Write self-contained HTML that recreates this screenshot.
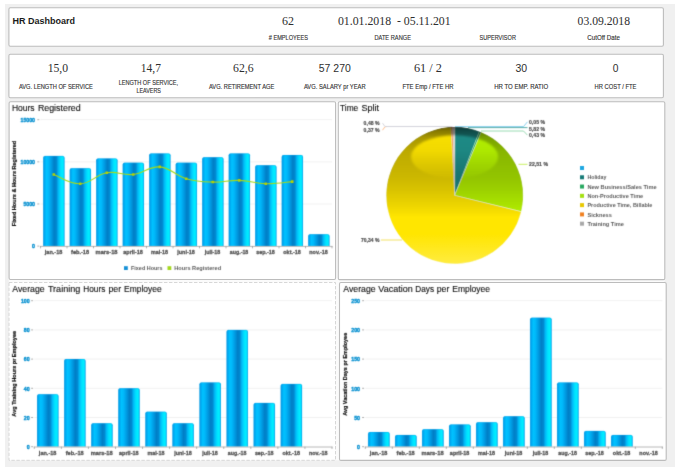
<!DOCTYPE html>
<html lang="en"><head><meta charset="utf-8"><title>HR Dashboard</title>
<style>
html,body{margin:0;padding:0;background:#fff;}
body{width:675px;height:467px;overflow:hidden;font-family:"Liberation Sans", "DejaVu Sans", sans-serif;}
svg{display:block;position:absolute;left:0;top:0;}
svg text{font-family:"Liberation Sans", "DejaVu Sans", sans-serif;}
svg text.sf{font-family:"Liberation Serif", "DejaVu Serif", serif;}
</style></head><body>
<svg width="675" height="467" viewBox="0 0 675 467">
<defs>
<filter id="soft" x="0" y="0" width="675" height="467" filterUnits="userSpaceOnUse" color-interpolation-filters="sRGB"><feConvolveMatrix order="3" kernelMatrix="1 6 1 6 36 6 1 6 1" divisor="64" edgeMode="none" preserveAlpha="false"/></filter>
<linearGradient id="bar" x1="0" y1="0" x2="1" y2="0">
<stop offset="0" stop-color="#0096e0"/>
<stop offset="0.06" stop-color="#00a8f0"/>
<stop offset="0.15" stop-color="#00c2ff"/>
<stop offset="0.25" stop-color="#00b8fa"/>
<stop offset="0.40" stop-color="#0098e0"/>
<stop offset="0.52" stop-color="#007ec6"/>
<stop offset="0.62" stop-color="#0088d0"/>
<stop offset="0.71" stop-color="#00b8f6"/>
<stop offset="0.81" stop-color="#00dcff"/>
<stop offset="0.90" stop-color="#00eeff"/>
<stop offset="0.96" stop-color="#00e0ff"/>
<stop offset="1" stop-color="#00a8ec"/>
</linearGradient>
<linearGradient id="shade" x1="0" y1="0" x2="0" y2="1">
<stop offset="0" stop-color="#000" stop-opacity="0.60"/>
<stop offset="0.03" stop-color="#000" stop-opacity="0.48"/>
<stop offset="0.08" stop-color="#000" stop-opacity="0.34"/>
<stop offset="0.18" stop-color="#000" stop-opacity="0.26"/>
<stop offset="0.37" stop-color="#000" stop-opacity="0.20"/>
<stop offset="0.46" stop-color="#000" stop-opacity="0.15"/>
<stop offset="0.57" stop-color="#000" stop-opacity="0.075"/>
<stop offset="0.66" stop-color="#000" stop-opacity="0.0"/>
<stop offset="0.78" stop-color="#fff" stop-opacity="0.0"/>
<stop offset="1" stop-color="#fff" stop-opacity="0.25"/>
</linearGradient>
<linearGradient id="hl" x1="0" y1="0" x2="0" y2="1">
<stop offset="0" stop-color="#000" stop-opacity="0.92"/>
<stop offset="0.35" stop-color="#000" stop-opacity="0.8"/>
<stop offset="0.75" stop-color="#000" stop-opacity="0.35"/>
<stop offset="1" stop-color="#000" stop-opacity="0.05"/>
</linearGradient>
<filter id="hb" x="-10%" y="-20%" width="120%" height="140%"><feGaussianBlur stdDeviation="1.3"/></filter>
<mask id="shmask" maskUnits="userSpaceOnUse" x="380" y="120" width="150" height="150">
<rect x="380" y="120" width="150" height="150" fill="#fff"/>
<ellipse cx="454.6" cy="156.8" rx="43.5" ry="21.5" fill="url(#hl)" filter="url(#hb)"/>
</mask>
<clipPath id="pieclip"><circle cx="454.7" cy="195.4" r="68.6"/></clipPath>
<filter id="b1" x="-20%" y="-20%" width="140%" height="140%"><feGaussianBlur stdDeviation="4"/></filter>
</defs>
<rect x="0" y="0" width="675" height="467" fill="#fff"/>
<rect x="5" y="4" width="670" height="463" fill="#f0f0f0"/>

<rect x="8.9" y="7.8" width="654.50" height="38.40" rx="1.4" fill="#fff" stroke="#bcbcbc" stroke-width="1.1"/>
<rect x="8.9" y="54.3" width="654.50" height="43.40" rx="1.4" fill="#fff" stroke="#bcbcbc" stroke-width="1.1"/>
<rect x="8.8" y="101.6" width="655.6" height="358.7" fill="#fbfbfb"/>
<rect x="9.1" y="101.7" width="326.50" height="177.80" rx="1.4" fill="#fff" stroke="#bcbcbc" stroke-width="1.1"/>
<rect x="338.3" y="101.7" width="326.50" height="177.90" rx="1.4" fill="#fff" stroke="#bcbcbc" stroke-width="1.1"/>
<rect x="9.0" y="282.5" width="326.50" height="177.80" fill="#fff" stroke="#d2d2d2" stroke-width="0.9" stroke-dasharray="3.4 1.6"/>
<rect x="339.5" y="282.5" width="326.70" height="177.90" rx="1.4" fill="#fff" stroke="#bcbcbc" stroke-width="1.1"/>
<text x="12.60" y="24.40" font-size="9.6" text-anchor="start" fill="#1a1a1a" font-weight="bold" textLength="62.50" lengthAdjust="spacingAndGlyphs">HR Dashboard</text>
<text x="288.00" y="25.10" font-size="12.0" text-anchor="middle" fill="#2e2e2e" class="sf" textLength="12.00" lengthAdjust="spacingAndGlyphs">62</text>
<text x="288.40" y="40.00" font-size="6.7" text-anchor="middle" fill="#303030" textLength="39.40" lengthAdjust="spacingAndGlyphs" stroke="#303030" stroke-width="0.12"># EMPLOYEES</text>
<text x="394.30" y="25.10" font-size="12.0" text-anchor="middle" fill="#2e2e2e" class="sf" textLength="112.70" lengthAdjust="spacingAndGlyphs" xml:space="preserve">01.01.2018  - 05.11.201</text>
<text x="392.70" y="40.00" font-size="6.7" text-anchor="middle" fill="#303030" textLength="36.50" lengthAdjust="spacingAndGlyphs" stroke="#303030" stroke-width="0.12">DATE RANGE</text>
<text x="497.70" y="40.00" font-size="6.7" text-anchor="middle" fill="#303030" textLength="36.40" lengthAdjust="spacingAndGlyphs" stroke="#303030" stroke-width="0.12">SUPERVISOR</text>
<text x="603.80" y="25.10" font-size="12.0" text-anchor="middle" fill="#2e2e2e" class="sf" textLength="52.40" lengthAdjust="spacingAndGlyphs">03.09.2018</text>
<text x="603.60" y="40.00" font-size="6.7" text-anchor="middle" fill="#303030" textLength="32.60" lengthAdjust="spacingAndGlyphs" stroke="#303030" stroke-width="0.12">CutOff Date</text>
<text x="57.90" y="72.00" font-size="12.0" text-anchor="middle" fill="#2e2e2e" class="sf" textLength="20.40" lengthAdjust="spacingAndGlyphs">15,0</text>
<text x="55.90" y="88.80" font-size="6.7" text-anchor="middle" fill="#303030" textLength="73.90" lengthAdjust="spacingAndGlyphs" stroke="#303030" stroke-width="0.12">AVG. LENGTH OF SERVICE</text>
<text x="150.90" y="72.00" font-size="12.0" text-anchor="middle" fill="#2e2e2e" class="sf" textLength="20.10" lengthAdjust="spacingAndGlyphs">14,7</text>
<text x="148.40" y="85.20" font-size="6.7" text-anchor="middle" fill="#303030" textLength="59.50" lengthAdjust="spacingAndGlyphs" stroke="#303030" stroke-width="0.12">LENGTH OF SERVICE,</text>
<text x="148.70" y="92.70" font-size="6.7" text-anchor="middle" fill="#303030" textLength="24.50" lengthAdjust="spacingAndGlyphs" stroke="#303030" stroke-width="0.12">LEAVERS</text>
<text x="243.30" y="72.00" font-size="12.0" text-anchor="middle" fill="#2e2e2e" class="sf" textLength="20.60" lengthAdjust="spacingAndGlyphs">62,6</text>
<text x="241.60" y="88.80" font-size="6.7" text-anchor="middle" fill="#303030" textLength="65.30" lengthAdjust="spacingAndGlyphs" stroke="#303030" stroke-width="0.12">AVG. RETIREMENT AGE</text>
<text x="334.80" y="72.00" font-size="11.2" text-anchor="middle" fill="#2e2e2e" textLength="32.00" lengthAdjust="spacingAndGlyphs">57 270</text>
<text x="334.80" y="88.80" font-size="6.7" text-anchor="middle" fill="#303030" textLength="61.70" lengthAdjust="spacingAndGlyphs" stroke="#303030" stroke-width="0.12">AVG. SALARY pr YEAR</text>
<text x="427.90" y="72.00" font-size="12.0" text-anchor="middle" fill="#2e2e2e" class="sf" textLength="27.90" lengthAdjust="spacingAndGlyphs">61 / 2</text>
<text x="428.00" y="88.80" font-size="6.7" text-anchor="middle" fill="#303030" textLength="51.20" lengthAdjust="spacingAndGlyphs" stroke="#303030" stroke-width="0.12">FTE Emp / FTE HR</text>
<text x="521.30" y="72.00" font-size="11.2" text-anchor="middle" fill="#2e2e2e" textLength="11.70" lengthAdjust="spacingAndGlyphs">30</text>
<text x="521.20" y="88.80" font-size="6.7" text-anchor="middle" fill="#303030" textLength="53.90" lengthAdjust="spacingAndGlyphs" stroke="#303030" stroke-width="0.12">HR TO EMP. RATIO</text>
<text x="615.60" y="72.00" font-size="11.2" text-anchor="middle" fill="#2e2e2e" textLength="5.70" lengthAdjust="spacingAndGlyphs">0</text>
<text x="615.50" y="88.80" font-size="6.7" text-anchor="middle" fill="#303030" textLength="41.90" lengthAdjust="spacingAndGlyphs" stroke="#303030" stroke-width="0.12">HR COST / FTE</text>
<g filter="url(#soft)">
<text y="111.30" font-size="9.2" fill="#0c0c0c" stroke="#0c0c0c" stroke-width="0.12"><tspan x="11.90" textLength="22.70" lengthAdjust="spacingAndGlyphs">Hours</tspan> <tspan x="37.90" textLength="42.80" lengthAdjust="spacingAndGlyphs">Registered</tspan></text>
<line x1="37.30" y1="246.10" x2="39.30" y2="246.10" stroke="#999" stroke-width="0.8"/>
<text x="35.00" y="248.30" font-size="6.1" text-anchor="end" fill="#0f94d2" font-weight="bold" textLength="2.90" lengthAdjust="spacingAndGlyphs" stroke="#0f94d2" stroke-width="0.45">0</text>
<line x1="40.50" y1="203.97" x2="332.00" y2="203.97" stroke="#efefef" stroke-width="0.9"/>
<line x1="37.30" y1="203.97" x2="39.30" y2="203.97" stroke="#999" stroke-width="0.8"/>
<text x="35.00" y="206.17" font-size="6.1" text-anchor="end" fill="#0f94d2" font-weight="bold" textLength="11.60" lengthAdjust="spacingAndGlyphs" stroke="#0f94d2" stroke-width="0.45">5000</text>
<line x1="40.50" y1="161.83" x2="332.00" y2="161.83" stroke="#efefef" stroke-width="0.9"/>
<line x1="37.30" y1="161.83" x2="39.30" y2="161.83" stroke="#999" stroke-width="0.8"/>
<text x="35.00" y="164.03" font-size="6.1" text-anchor="end" fill="#0f94d2" font-weight="bold" textLength="14.50" lengthAdjust="spacingAndGlyphs" stroke="#0f94d2" stroke-width="0.45">10000</text>
<line x1="40.50" y1="119.70" x2="332.00" y2="119.70" stroke="#efefef" stroke-width="0.9"/>
<line x1="37.30" y1="119.70" x2="39.30" y2="119.70" stroke="#999" stroke-width="0.8"/>
<text x="35.00" y="121.90" font-size="6.1" text-anchor="end" fill="#0f94d2" font-weight="bold" textLength="14.50" lengthAdjust="spacingAndGlyphs" stroke="#0f94d2" stroke-width="0.45">15000</text>
<path d="M43.25,246.10 L43.25,157.73 Q43.25,155.93 45.05,155.93 L62.65,155.93 Q64.45,155.93 64.45,157.73 L64.45,246.10 Z" fill="url(#bar)"/>
<path d="M43.55,246.10 L43.55,157.73 Q43.55,156.23 45.05,156.23 L62.65,156.23 Q64.15,156.23 64.15,157.73 L64.15,246.10" fill="none" stroke="#08a0e8" stroke-opacity="0.75" stroke-width="0.6"/>
<path d="M69.75,246.10 L69.75,169.95 Q69.75,168.15 71.55,168.15 L89.15,168.15 Q90.95,168.15 90.95,169.95 L90.95,246.10 Z" fill="url(#bar)"/>
<path d="M70.05,246.10 L70.05,169.95 Q70.05,168.45 71.55,168.45 L89.15,168.45 Q90.65,168.45 90.65,169.95 L90.65,246.10" fill="none" stroke="#08a0e8" stroke-opacity="0.75" stroke-width="0.6"/>
<path d="M96.25,246.10 L96.25,160.26 Q96.25,158.46 98.05,158.46 L115.65,158.46 Q117.45,158.46 117.45,160.26 L117.45,246.10 Z" fill="url(#bar)"/>
<path d="M96.55,246.10 L96.55,160.26 Q96.55,158.76 98.05,158.76 L115.65,158.76 Q117.15,158.76 117.15,160.26 L117.15,246.10" fill="none" stroke="#08a0e8" stroke-opacity="0.75" stroke-width="0.6"/>
<path d="M122.75,246.10 L122.75,164.48 Q122.75,162.68 124.55,162.68 L142.15,162.68 Q143.95,162.68 143.95,164.48 L143.95,246.10 Z" fill="url(#bar)"/>
<path d="M123.05,246.10 L123.05,164.48 Q123.05,162.98 124.55,162.98 L142.15,162.98 Q143.65,162.98 143.65,164.48 L143.65,246.10" fill="none" stroke="#08a0e8" stroke-opacity="0.75" stroke-width="0.6"/>
<path d="M149.25,246.10 L149.25,155.21 Q149.25,153.41 151.05,153.41 L168.65,153.41 Q170.45,153.41 170.45,155.21 L170.45,246.10 Z" fill="url(#bar)"/>
<path d="M149.55,246.10 L149.55,155.21 Q149.55,153.71 151.05,153.71 L168.65,153.71 Q170.15,153.71 170.15,155.21 L170.15,246.10" fill="none" stroke="#08a0e8" stroke-opacity="0.75" stroke-width="0.6"/>
<path d="M175.75,246.10 L175.75,164.48 Q175.75,162.68 177.55,162.68 L195.15,162.68 Q196.95,162.68 196.95,164.48 L196.95,246.10 Z" fill="url(#bar)"/>
<path d="M176.05,246.10 L176.05,164.48 Q176.05,162.98 177.55,162.98 L195.15,162.98 Q196.65,162.98 196.65,164.48 L196.65,246.10" fill="none" stroke="#08a0e8" stroke-opacity="0.75" stroke-width="0.6"/>
<path d="M202.25,246.10 L202.25,159.00 Q202.25,157.20 204.05,157.20 L221.65,157.20 Q223.45,157.20 223.45,159.00 L223.45,246.10 Z" fill="url(#bar)"/>
<path d="M202.55,246.10 L202.55,159.00 Q202.55,157.50 204.05,157.50 L221.65,157.50 Q223.15,157.50 223.15,159.00 L223.15,246.10" fill="none" stroke="#08a0e8" stroke-opacity="0.75" stroke-width="0.6"/>
<path d="M228.75,246.10 L228.75,155.21 Q228.75,153.41 230.55,153.41 L248.15,153.41 Q249.95,153.41 249.95,155.21 L249.95,246.10 Z" fill="url(#bar)"/>
<path d="M229.05,246.10 L229.05,155.21 Q229.05,153.71 230.55,153.71 L248.15,153.71 Q249.65,153.71 249.65,155.21 L249.65,246.10" fill="none" stroke="#08a0e8" stroke-opacity="0.75" stroke-width="0.6"/>
<path d="M255.25,246.10 L255.25,167.00 Q255.25,165.20 257.05,165.20 L274.65,165.20 Q276.45,165.20 276.45,167.00 L276.45,246.10 Z" fill="url(#bar)"/>
<path d="M255.55,246.10 L255.55,167.00 Q255.55,165.50 257.05,165.50 L274.65,165.50 Q276.15,165.50 276.15,167.00 L276.15,246.10" fill="none" stroke="#08a0e8" stroke-opacity="0.75" stroke-width="0.6"/>
<path d="M281.75,246.10 L281.75,156.89 Q281.75,155.09 283.55,155.09 L301.15,155.09 Q302.95,155.09 302.95,156.89 L302.95,246.10 Z" fill="url(#bar)"/>
<path d="M282.05,246.10 L282.05,156.89 Q282.05,155.39 283.55,155.39 L301.15,155.39 Q302.65,155.39 302.65,156.89 L302.65,246.10" fill="none" stroke="#08a0e8" stroke-opacity="0.75" stroke-width="0.6"/>
<path d="M308.25,246.10 L308.25,236.10 Q308.25,234.30 310.05,234.30 L327.65,234.30 Q329.45,234.30 329.45,236.10 L329.45,246.10 Z" fill="url(#bar)"/>
<path d="M308.55,246.10 L308.55,236.10 Q308.55,234.60 310.05,234.60 L327.65,234.60 Q329.15,234.60 329.15,236.10 L329.15,246.10" fill="none" stroke="#08a0e8" stroke-opacity="0.75" stroke-width="0.6"/>
<line x1="40.00" y1="246.40" x2="332.50" y2="246.40" stroke="#b8b8b8" stroke-width="1"/>
<line x1="40.50" y1="246.10" x2="40.50" y2="248.30" stroke="#999" stroke-width="0.8"/>
<line x1="67.00" y1="246.10" x2="67.00" y2="248.30" stroke="#999" stroke-width="0.8"/>
<line x1="93.50" y1="246.10" x2="93.50" y2="248.30" stroke="#999" stroke-width="0.8"/>
<line x1="120.00" y1="246.10" x2="120.00" y2="248.30" stroke="#999" stroke-width="0.8"/>
<line x1="146.50" y1="246.10" x2="146.50" y2="248.30" stroke="#999" stroke-width="0.8"/>
<line x1="173.00" y1="246.10" x2="173.00" y2="248.30" stroke="#999" stroke-width="0.8"/>
<line x1="199.50" y1="246.10" x2="199.50" y2="248.30" stroke="#999" stroke-width="0.8"/>
<line x1="226.00" y1="246.10" x2="226.00" y2="248.30" stroke="#999" stroke-width="0.8"/>
<line x1="252.50" y1="246.10" x2="252.50" y2="248.30" stroke="#999" stroke-width="0.8"/>
<line x1="279.00" y1="246.10" x2="279.00" y2="248.30" stroke="#999" stroke-width="0.8"/>
<line x1="305.50" y1="246.10" x2="305.50" y2="248.30" stroke="#999" stroke-width="0.8"/>
<line x1="332.00" y1="246.10" x2="332.00" y2="248.30" stroke="#999" stroke-width="0.8"/>
<text x="53.55" y="253.80" font-size="5.5" text-anchor="middle" fill="#555" font-weight="bold" textLength="17.50" lengthAdjust="spacingAndGlyphs" stroke="#555" stroke-width="0.3">jan.-18</text>
<text x="80.05" y="253.80" font-size="5.5" text-anchor="middle" fill="#555" font-weight="bold" textLength="18.00" lengthAdjust="spacingAndGlyphs" stroke="#555" stroke-width="0.3">feb.-18</text>
<text x="106.55" y="253.80" font-size="5.5" text-anchor="middle" fill="#555" font-weight="bold" textLength="22.00" lengthAdjust="spacingAndGlyphs" stroke="#555" stroke-width="0.3">mars-18</text>
<text x="133.05" y="253.80" font-size="5.5" text-anchor="middle" fill="#555" font-weight="bold" textLength="19.50" lengthAdjust="spacingAndGlyphs" stroke="#555" stroke-width="0.3">april-18</text>
<text x="159.55" y="253.80" font-size="5.5" text-anchor="middle" fill="#555" font-weight="bold" textLength="17.00" lengthAdjust="spacingAndGlyphs" stroke="#555" stroke-width="0.3">mai-18</text>
<text x="186.05" y="253.80" font-size="5.5" text-anchor="middle" fill="#555" font-weight="bold" textLength="17.50" lengthAdjust="spacingAndGlyphs" stroke="#555" stroke-width="0.3">juni-18</text>
<text x="212.55" y="253.80" font-size="5.5" text-anchor="middle" fill="#555" font-weight="bold" textLength="15.50" lengthAdjust="spacingAndGlyphs" stroke="#555" stroke-width="0.3">juli-18</text>
<text x="239.05" y="253.80" font-size="5.5" text-anchor="middle" fill="#555" font-weight="bold" textLength="18.50" lengthAdjust="spacingAndGlyphs" stroke="#555" stroke-width="0.3">aug.-18</text>
<text x="265.55" y="253.80" font-size="5.5" text-anchor="middle" fill="#555" font-weight="bold" textLength="18.50" lengthAdjust="spacingAndGlyphs" stroke="#555" stroke-width="0.3">sep.-18</text>
<text x="292.05" y="253.80" font-size="5.5" text-anchor="middle" fill="#555" font-weight="bold" textLength="17.50" lengthAdjust="spacingAndGlyphs" stroke="#555" stroke-width="0.3">okt.-18</text>
<text x="318.55" y="253.80" font-size="5.5" text-anchor="middle" fill="#555" font-weight="bold" textLength="18.50" lengthAdjust="spacingAndGlyphs" stroke="#555" stroke-width="0.3">nov.-18</text>
<text transform="translate(16.20,183.50) rotate(-90)" font-size="5.4" font-weight="bold" fill="#111" stroke="#111" stroke-width="0.2" text-anchor="middle" textLength="85.4" lengthAdjust="spacingAndGlyphs">Fixed Hours &amp; Hours Registered</text>
<path d="M53.75,174.47 C59.27,176.40 69.21,184.09 80.25,183.74 C91.29,183.39 95.71,174.72 106.75,172.79 C117.79,170.86 122.21,175.70 133.25,174.47 C144.29,173.24 148.71,166.01 159.75,166.89 C170.79,167.77 175.21,175.53 186.25,178.69 C197.29,181.85 201.71,181.71 212.75,182.06 C223.79,182.41 228.21,180.02 239.25,180.37 C250.29,180.72 254.71,183.48 265.75,183.74 C276.79,184.01 286.73,182.07 292.25,181.64" fill="none" stroke="#a4d81c" stroke-width="1.1"/>
<rect x="52.45" y="173.17" width="2.6" height="2.6" rx="0.5" fill="#b6d400"/>
<rect x="78.95" y="182.44" width="2.6" height="2.6" rx="0.5" fill="#b6d400"/>
<rect x="105.45" y="171.49" width="2.6" height="2.6" rx="0.5" fill="#b6d400"/>
<rect x="131.95" y="173.17" width="2.6" height="2.6" rx="0.5" fill="#b6d400"/>
<rect x="158.45" y="165.59" width="2.6" height="2.6" rx="0.5" fill="#b6d400"/>
<rect x="184.95" y="177.39" width="2.6" height="2.6" rx="0.5" fill="#b6d400"/>
<rect x="211.45" y="180.76" width="2.6" height="2.6" rx="0.5" fill="#b6d400"/>
<rect x="237.95" y="179.07" width="2.6" height="2.6" rx="0.5" fill="#b6d400"/>
<rect x="264.45" y="182.44" width="2.6" height="2.6" rx="0.5" fill="#b6d400"/>
<rect x="290.95" y="180.34" width="2.6" height="2.6" rx="0.5" fill="#b6d400"/>
<rect x="124" y="266.2" width="3.8" height="3.8" fill="#1590d6"/>
<text x="131.00" y="270.30" font-size="6.2" text-anchor="start" fill="#5a5a5a" font-weight="bold" textLength="31.50" lengthAdjust="spacingAndGlyphs">Fixed Hours</text>
<rect x="167.5" y="266.2" width="3.8" height="3.8" fill="#a4d81c"/>
<text x="174.30" y="270.30" font-size="6.2" text-anchor="start" fill="#5a5a5a" font-weight="bold" textLength="46.80" lengthAdjust="spacingAndGlyphs">Hours Registered</text>
<text y="292.20" font-size="9.2" fill="#0c0c0c" stroke="#0c0c0c" stroke-width="0.12"><tspan x="12.30" textLength="32.40" lengthAdjust="spacingAndGlyphs">Average</tspan> <tspan x="47.90" textLength="32.40" lengthAdjust="spacingAndGlyphs">Training</tspan> <tspan x="83.30" textLength="22.00" lengthAdjust="spacingAndGlyphs">Hours</tspan> <tspan x="108.40" textLength="12.70" lengthAdjust="spacingAndGlyphs">per</tspan> <tspan x="124.00" textLength="37.60" lengthAdjust="spacingAndGlyphs">Employee</tspan></text>
<line x1="31.10" y1="446.70" x2="33.10" y2="446.70" stroke="#999" stroke-width="0.8"/>
<text x="29.60" y="448.90" font-size="6.1" text-anchor="end" fill="#0f94d2" font-weight="bold" textLength="2.90" lengthAdjust="spacingAndGlyphs" stroke="#0f94d2" stroke-width="0.45">0</text>
<line x1="34.30" y1="417.50" x2="332.00" y2="417.50" stroke="#efefef" stroke-width="0.9"/>
<line x1="31.10" y1="417.50" x2="33.10" y2="417.50" stroke="#999" stroke-width="0.8"/>
<text x="29.60" y="419.70" font-size="6.1" text-anchor="end" fill="#0f94d2" font-weight="bold" textLength="5.80" lengthAdjust="spacingAndGlyphs" stroke="#0f94d2" stroke-width="0.45">20</text>
<line x1="34.30" y1="388.30" x2="332.00" y2="388.30" stroke="#efefef" stroke-width="0.9"/>
<line x1="31.10" y1="388.30" x2="33.10" y2="388.30" stroke="#999" stroke-width="0.8"/>
<text x="29.60" y="390.50" font-size="6.1" text-anchor="end" fill="#0f94d2" font-weight="bold" textLength="5.80" lengthAdjust="spacingAndGlyphs" stroke="#0f94d2" stroke-width="0.45">40</text>
<line x1="34.30" y1="359.10" x2="332.00" y2="359.10" stroke="#efefef" stroke-width="0.9"/>
<line x1="31.10" y1="359.10" x2="33.10" y2="359.10" stroke="#999" stroke-width="0.8"/>
<text x="29.60" y="361.30" font-size="6.1" text-anchor="end" fill="#0f94d2" font-weight="bold" textLength="5.80" lengthAdjust="spacingAndGlyphs" stroke="#0f94d2" stroke-width="0.45">60</text>
<line x1="34.30" y1="329.90" x2="332.00" y2="329.90" stroke="#efefef" stroke-width="0.9"/>
<line x1="31.10" y1="329.90" x2="33.10" y2="329.90" stroke="#999" stroke-width="0.8"/>
<text x="29.60" y="332.10" font-size="6.1" text-anchor="end" fill="#0f94d2" font-weight="bold" textLength="5.80" lengthAdjust="spacingAndGlyphs" stroke="#0f94d2" stroke-width="0.45">80</text>
<line x1="34.30" y1="300.70" x2="332.00" y2="300.70" stroke="#efefef" stroke-width="0.9"/>
<line x1="31.10" y1="300.70" x2="33.10" y2="300.70" stroke="#999" stroke-width="0.8"/>
<text x="29.60" y="302.90" font-size="6.1" text-anchor="end" fill="#0f94d2" font-weight="bold" textLength="8.70" lengthAdjust="spacingAndGlyphs" stroke="#0f94d2" stroke-width="0.45">100</text>
<path d="M37.15,446.70 L37.15,395.94 Q37.15,394.14 38.95,394.14 L56.65,394.14 Q58.45,394.14 58.45,395.94 L58.45,446.70 Z" fill="url(#bar)"/>
<path d="M37.45,446.70 L37.45,395.94 Q37.45,394.44 38.95,394.44 L56.65,394.44 Q58.15,394.44 58.15,395.94 L58.15,446.70" fill="none" stroke="#08a0e8" stroke-opacity="0.75" stroke-width="0.6"/>
<path d="M64.21,446.70 L64.21,360.90 Q64.21,359.10 66.01,359.10 L83.71,359.10 Q85.51,359.10 85.51,360.90 L85.51,446.70 Z" fill="url(#bar)"/>
<path d="M64.51,446.70 L64.51,360.90 Q64.51,359.40 66.01,359.40 L83.71,359.40 Q85.21,359.40 85.21,360.90 L85.21,446.70" fill="none" stroke="#08a0e8" stroke-opacity="0.75" stroke-width="0.6"/>
<path d="M91.28,446.70 L91.28,425.14 Q91.28,423.34 93.08,423.34 L110.78,423.34 Q112.58,423.34 112.58,425.14 L112.58,446.70 Z" fill="url(#bar)"/>
<path d="M91.58,446.70 L91.58,425.14 Q91.58,423.64 93.08,423.64 L110.78,423.64 Q112.28,423.64 112.28,425.14 L112.28,446.70" fill="none" stroke="#08a0e8" stroke-opacity="0.75" stroke-width="0.6"/>
<path d="M118.34,446.70 L118.34,390.10 Q118.34,388.30 120.14,388.30 L137.84,388.30 Q139.64,388.30 139.64,390.10 L139.64,446.70 Z" fill="url(#bar)"/>
<path d="M118.64,446.70 L118.64,390.10 Q118.64,388.60 120.14,388.60 L137.84,388.60 Q139.34,388.60 139.34,390.10 L139.34,446.70" fill="none" stroke="#08a0e8" stroke-opacity="0.75" stroke-width="0.6"/>
<path d="M145.40,446.70 L145.40,413.46 Q145.40,411.66 147.20,411.66 L164.90,411.66 Q166.70,411.66 166.70,413.46 L166.70,446.70 Z" fill="url(#bar)"/>
<path d="M145.70,446.70 L145.70,413.46 Q145.70,411.96 147.20,411.96 L164.90,411.96 Q166.40,411.96 166.40,413.46 L166.40,446.70" fill="none" stroke="#08a0e8" stroke-opacity="0.75" stroke-width="0.6"/>
<path d="M172.47,446.70 L172.47,425.14 Q172.47,423.34 174.27,423.34 L191.97,423.34 Q193.77,423.34 193.77,425.14 L193.77,446.70 Z" fill="url(#bar)"/>
<path d="M172.77,446.70 L172.77,425.14 Q172.77,423.64 174.27,423.64 L191.97,423.64 Q193.47,423.64 193.47,425.14 L193.47,446.70" fill="none" stroke="#08a0e8" stroke-opacity="0.75" stroke-width="0.6"/>
<path d="M199.53,446.70 L199.53,384.26 Q199.53,382.46 201.33,382.46 L219.03,382.46 Q220.83,382.46 220.83,384.26 L220.83,446.70 Z" fill="url(#bar)"/>
<path d="M199.83,446.70 L199.83,384.26 Q199.83,382.76 201.33,382.76 L219.03,382.76 Q220.53,382.76 220.53,384.26 L220.53,446.70" fill="none" stroke="#08a0e8" stroke-opacity="0.75" stroke-width="0.6"/>
<path d="M226.60,446.70 L226.60,331.70 Q226.60,329.90 228.40,329.90 L246.10,329.90 Q247.90,329.90 247.90,331.70 L247.90,446.70 Z" fill="url(#bar)"/>
<path d="M226.90,446.70 L226.90,331.70 Q226.90,330.20 228.40,330.20 L246.10,330.20 Q247.60,330.20 247.60,331.70 L247.60,446.70" fill="none" stroke="#08a0e8" stroke-opacity="0.75" stroke-width="0.6"/>
<path d="M253.66,446.70 L253.66,404.70 Q253.66,402.90 255.46,402.90 L273.16,402.90 Q274.96,402.90 274.96,404.70 L274.96,446.70 Z" fill="url(#bar)"/>
<path d="M253.96,446.70 L253.96,404.70 Q253.96,403.20 255.46,403.20 L273.16,403.20 Q274.66,403.20 274.66,404.70 L274.66,446.70" fill="none" stroke="#08a0e8" stroke-opacity="0.75" stroke-width="0.6"/>
<path d="M280.72,446.70 L280.72,385.72 Q280.72,383.92 282.52,383.92 L300.22,383.92 Q302.02,383.92 302.02,385.72 L302.02,446.70 Z" fill="url(#bar)"/>
<path d="M281.02,446.70 L281.02,385.72 Q281.02,384.22 282.52,384.22 L300.22,384.22 Q301.72,384.22 301.72,385.72 L301.72,446.70" fill="none" stroke="#08a0e8" stroke-opacity="0.75" stroke-width="0.6"/>
<line x1="33.80" y1="447.00" x2="332.50" y2="447.00" stroke="#b8b8b8" stroke-width="1"/>
<line x1="34.30" y1="446.70" x2="34.30" y2="448.90" stroke="#999" stroke-width="0.8"/>
<line x1="61.36" y1="446.70" x2="61.36" y2="448.90" stroke="#999" stroke-width="0.8"/>
<line x1="88.43" y1="446.70" x2="88.43" y2="448.90" stroke="#999" stroke-width="0.8"/>
<line x1="115.49" y1="446.70" x2="115.49" y2="448.90" stroke="#999" stroke-width="0.8"/>
<line x1="142.55" y1="446.70" x2="142.55" y2="448.90" stroke="#999" stroke-width="0.8"/>
<line x1="169.62" y1="446.70" x2="169.62" y2="448.90" stroke="#999" stroke-width="0.8"/>
<line x1="196.68" y1="446.70" x2="196.68" y2="448.90" stroke="#999" stroke-width="0.8"/>
<line x1="223.75" y1="446.70" x2="223.75" y2="448.90" stroke="#999" stroke-width="0.8"/>
<line x1="250.81" y1="446.70" x2="250.81" y2="448.90" stroke="#999" stroke-width="0.8"/>
<line x1="277.87" y1="446.70" x2="277.87" y2="448.90" stroke="#999" stroke-width="0.8"/>
<line x1="304.94" y1="446.70" x2="304.94" y2="448.90" stroke="#999" stroke-width="0.8"/>
<line x1="332.00" y1="446.70" x2="332.00" y2="448.90" stroke="#999" stroke-width="0.8"/>
<text x="47.63" y="454.70" font-size="5.5" text-anchor="middle" fill="#555" font-weight="bold" textLength="17.50" lengthAdjust="spacingAndGlyphs" stroke="#555" stroke-width="0.3">jan.-18</text>
<text x="74.70" y="454.70" font-size="5.5" text-anchor="middle" fill="#555" font-weight="bold" textLength="18.00" lengthAdjust="spacingAndGlyphs" stroke="#555" stroke-width="0.3">feb.-18</text>
<text x="101.76" y="454.70" font-size="5.5" text-anchor="middle" fill="#555" font-weight="bold" textLength="22.00" lengthAdjust="spacingAndGlyphs" stroke="#555" stroke-width="0.3">mars-18</text>
<text x="128.82" y="454.70" font-size="5.5" text-anchor="middle" fill="#555" font-weight="bold" textLength="19.50" lengthAdjust="spacingAndGlyphs" stroke="#555" stroke-width="0.3">april-18</text>
<text x="155.89" y="454.70" font-size="5.5" text-anchor="middle" fill="#555" font-weight="bold" textLength="17.00" lengthAdjust="spacingAndGlyphs" stroke="#555" stroke-width="0.3">mai-18</text>
<text x="182.95" y="454.70" font-size="5.5" text-anchor="middle" fill="#555" font-weight="bold" textLength="17.50" lengthAdjust="spacingAndGlyphs" stroke="#555" stroke-width="0.3">juni-18</text>
<text x="210.01" y="454.70" font-size="5.5" text-anchor="middle" fill="#555" font-weight="bold" textLength="15.50" lengthAdjust="spacingAndGlyphs" stroke="#555" stroke-width="0.3">juli-18</text>
<text x="237.08" y="454.70" font-size="5.5" text-anchor="middle" fill="#555" font-weight="bold" textLength="18.50" lengthAdjust="spacingAndGlyphs" stroke="#555" stroke-width="0.3">aug.-18</text>
<text x="264.14" y="454.70" font-size="5.5" text-anchor="middle" fill="#555" font-weight="bold" textLength="18.50" lengthAdjust="spacingAndGlyphs" stroke="#555" stroke-width="0.3">sep.-18</text>
<text x="291.20" y="454.70" font-size="5.5" text-anchor="middle" fill="#555" font-weight="bold" textLength="17.50" lengthAdjust="spacingAndGlyphs" stroke="#555" stroke-width="0.3">okt.-18</text>
<text x="318.27" y="454.70" font-size="5.5" text-anchor="middle" fill="#555" font-weight="bold" textLength="18.50" lengthAdjust="spacingAndGlyphs" stroke="#555" stroke-width="0.3">nov.-18</text>
<text transform="translate(16.20,373.80) rotate(-90)" font-size="5.4" font-weight="bold" fill="#111" stroke="#111" stroke-width="0.2" text-anchor="middle" textLength="85.7" lengthAdjust="spacingAndGlyphs">Avg Training Hours pr Employee</text>
<text y="292.20" font-size="9.2" fill="#0c0c0c" stroke="#0c0c0c" stroke-width="0.12"><tspan x="343.30" textLength="32.30" lengthAdjust="spacingAndGlyphs">Average</tspan> <tspan x="378.30" textLength="34.40" lengthAdjust="spacingAndGlyphs">Vacation</tspan> <tspan x="415.30" textLength="18.70" lengthAdjust="spacingAndGlyphs">Days</tspan> <tspan x="436.70" textLength="12.60" lengthAdjust="spacingAndGlyphs">per</tspan> <tspan x="452.30" textLength="37.70" lengthAdjust="spacingAndGlyphs">Employee</tspan></text>
<line x1="362.10" y1="446.70" x2="364.10" y2="446.70" stroke="#999" stroke-width="0.8"/>
<text x="360.00" y="448.90" font-size="6.1" text-anchor="end" fill="#0f94d2" font-weight="bold" textLength="2.90" lengthAdjust="spacingAndGlyphs" stroke="#0f94d2" stroke-width="0.45">0</text>
<line x1="365.30" y1="417.50" x2="662.30" y2="417.50" stroke="#efefef" stroke-width="0.9"/>
<line x1="362.10" y1="417.50" x2="364.10" y2="417.50" stroke="#999" stroke-width="0.8"/>
<text x="360.00" y="419.70" font-size="6.1" text-anchor="end" fill="#0f94d2" font-weight="bold" textLength="5.80" lengthAdjust="spacingAndGlyphs" stroke="#0f94d2" stroke-width="0.45">50</text>
<line x1="365.30" y1="388.30" x2="662.30" y2="388.30" stroke="#efefef" stroke-width="0.9"/>
<line x1="362.10" y1="388.30" x2="364.10" y2="388.30" stroke="#999" stroke-width="0.8"/>
<text x="360.00" y="390.50" font-size="6.1" text-anchor="end" fill="#0f94d2" font-weight="bold" textLength="8.70" lengthAdjust="spacingAndGlyphs" stroke="#0f94d2" stroke-width="0.45">100</text>
<line x1="365.30" y1="359.10" x2="662.30" y2="359.10" stroke="#efefef" stroke-width="0.9"/>
<line x1="362.10" y1="359.10" x2="364.10" y2="359.10" stroke="#999" stroke-width="0.8"/>
<text x="360.00" y="361.30" font-size="6.1" text-anchor="end" fill="#0f94d2" font-weight="bold" textLength="8.70" lengthAdjust="spacingAndGlyphs" stroke="#0f94d2" stroke-width="0.45">150</text>
<line x1="365.30" y1="329.90" x2="662.30" y2="329.90" stroke="#efefef" stroke-width="0.9"/>
<line x1="362.10" y1="329.90" x2="364.10" y2="329.90" stroke="#999" stroke-width="0.8"/>
<text x="360.00" y="332.10" font-size="6.1" text-anchor="end" fill="#0f94d2" font-weight="bold" textLength="8.70" lengthAdjust="spacingAndGlyphs" stroke="#0f94d2" stroke-width="0.45">200</text>
<line x1="365.30" y1="300.70" x2="662.30" y2="300.70" stroke="#efefef" stroke-width="0.9"/>
<line x1="362.10" y1="300.70" x2="364.10" y2="300.70" stroke="#999" stroke-width="0.8"/>
<text x="360.00" y="302.90" font-size="6.1" text-anchor="end" fill="#0f94d2" font-weight="bold" textLength="8.70" lengthAdjust="spacingAndGlyphs" stroke="#0f94d2" stroke-width="0.45">250</text>
<path d="M368.10,446.70 L368.10,433.90 Q368.10,432.10 369.90,432.10 L387.80,432.10 Q389.60,432.10 389.60,433.90 L389.60,446.70 Z" fill="url(#bar)"/>
<path d="M368.40,446.70 L368.40,433.90 Q368.40,432.40 369.90,432.40 L387.80,432.40 Q389.30,432.40 389.30,433.90 L389.30,446.70" fill="none" stroke="#08a0e8" stroke-opacity="0.75" stroke-width="0.6"/>
<path d="M395.10,446.70 L395.10,436.82 Q395.10,435.02 396.90,435.02 L414.80,435.02 Q416.60,435.02 416.60,436.82 L416.60,446.70 Z" fill="url(#bar)"/>
<path d="M395.40,446.70 L395.40,436.82 Q395.40,435.32 396.90,435.32 L414.80,435.32 Q416.30,435.32 416.30,436.82 L416.30,446.70" fill="none" stroke="#08a0e8" stroke-opacity="0.75" stroke-width="0.6"/>
<path d="M422.10,446.70 L422.10,430.98 Q422.10,429.18 423.90,429.18 L441.80,429.18 Q443.60,429.18 443.60,430.98 L443.60,446.70 Z" fill="url(#bar)"/>
<path d="M422.40,446.70 L422.40,430.98 Q422.40,429.48 423.90,429.48 L441.80,429.48 Q443.30,429.48 443.30,430.98 L443.30,446.70" fill="none" stroke="#08a0e8" stroke-opacity="0.75" stroke-width="0.6"/>
<path d="M449.10,446.70 L449.10,426.31 Q449.10,424.51 450.90,424.51 L468.80,424.51 Q470.60,424.51 470.60,426.31 L470.60,446.70 Z" fill="url(#bar)"/>
<path d="M449.40,446.70 L449.40,426.31 Q449.40,424.81 450.90,424.81 L468.80,424.81 Q470.30,424.81 470.30,426.31 L470.30,446.70" fill="none" stroke="#08a0e8" stroke-opacity="0.75" stroke-width="0.6"/>
<path d="M476.10,446.70 L476.10,423.97 Q476.10,422.17 477.90,422.17 L495.80,422.17 Q497.60,422.17 497.60,423.97 L497.60,446.70 Z" fill="url(#bar)"/>
<path d="M476.40,446.70 L476.40,423.97 Q476.40,422.47 477.90,422.47 L495.80,422.47 Q497.30,422.47 497.30,423.97 L497.30,446.70" fill="none" stroke="#08a0e8" stroke-opacity="0.75" stroke-width="0.6"/>
<path d="M503.10,446.70 L503.10,418.13 Q503.10,416.33 504.90,416.33 L522.80,416.33 Q524.60,416.33 524.60,418.13 L524.60,446.70 Z" fill="url(#bar)"/>
<path d="M503.40,446.70 L503.40,418.13 Q503.40,416.63 504.90,416.63 L522.80,416.63 Q524.30,416.63 524.30,418.13 L524.30,446.70" fill="none" stroke="#08a0e8" stroke-opacity="0.75" stroke-width="0.6"/>
<path d="M530.10,446.70 L530.10,319.44 Q530.10,317.64 531.90,317.64 L549.80,317.64 Q551.60,317.64 551.60,319.44 L551.60,446.70 Z" fill="url(#bar)"/>
<path d="M530.40,446.70 L530.40,319.44 Q530.40,317.94 531.90,317.94 L549.80,317.94 Q551.30,317.94 551.30,319.44 L551.30,446.70" fill="none" stroke="#08a0e8" stroke-opacity="0.75" stroke-width="0.6"/>
<path d="M557.10,446.70 L557.10,384.26 Q557.10,382.46 558.90,382.46 L576.80,382.46 Q578.60,382.46 578.60,384.26 L578.60,446.70 Z" fill="url(#bar)"/>
<path d="M557.40,446.70 L557.40,384.26 Q557.40,382.76 558.90,382.76 L576.80,382.76 Q578.30,382.76 578.30,384.26 L578.30,446.70" fill="none" stroke="#08a0e8" stroke-opacity="0.75" stroke-width="0.6"/>
<path d="M584.10,446.70 L584.10,432.73 Q584.10,430.93 585.90,430.93 L603.80,430.93 Q605.60,430.93 605.60,432.73 L605.60,446.70 Z" fill="url(#bar)"/>
<path d="M584.40,446.70 L584.40,432.73 Q584.40,431.23 585.90,431.23 L603.80,431.23 Q605.30,431.23 605.30,432.73 L605.30,446.70" fill="none" stroke="#08a0e8" stroke-opacity="0.75" stroke-width="0.6"/>
<path d="M611.10,446.70 L611.10,436.82 Q611.10,435.02 612.90,435.02 L630.80,435.02 Q632.60,435.02 632.60,436.82 L632.60,446.70 Z" fill="url(#bar)"/>
<path d="M611.40,446.70 L611.40,436.82 Q611.40,435.32 612.90,435.32 L630.80,435.32 Q632.30,435.32 632.30,436.82 L632.30,446.70" fill="none" stroke="#08a0e8" stroke-opacity="0.75" stroke-width="0.6"/>
<line x1="364.80" y1="447.00" x2="662.80" y2="447.00" stroke="#b8b8b8" stroke-width="1"/>
<line x1="365.30" y1="446.70" x2="365.30" y2="448.90" stroke="#999" stroke-width="0.8"/>
<line x1="392.30" y1="446.70" x2="392.30" y2="448.90" stroke="#999" stroke-width="0.8"/>
<line x1="419.30" y1="446.70" x2="419.30" y2="448.90" stroke="#999" stroke-width="0.8"/>
<line x1="446.30" y1="446.70" x2="446.30" y2="448.90" stroke="#999" stroke-width="0.8"/>
<line x1="473.30" y1="446.70" x2="473.30" y2="448.90" stroke="#999" stroke-width="0.8"/>
<line x1="500.30" y1="446.70" x2="500.30" y2="448.90" stroke="#999" stroke-width="0.8"/>
<line x1="527.30" y1="446.70" x2="527.30" y2="448.90" stroke="#999" stroke-width="0.8"/>
<line x1="554.30" y1="446.70" x2="554.30" y2="448.90" stroke="#999" stroke-width="0.8"/>
<line x1="581.30" y1="446.70" x2="581.30" y2="448.90" stroke="#999" stroke-width="0.8"/>
<line x1="608.30" y1="446.70" x2="608.30" y2="448.90" stroke="#999" stroke-width="0.8"/>
<line x1="635.30" y1="446.70" x2="635.30" y2="448.90" stroke="#999" stroke-width="0.8"/>
<line x1="662.30" y1="446.70" x2="662.30" y2="448.90" stroke="#999" stroke-width="0.8"/>
<text x="378.60" y="454.70" font-size="5.5" text-anchor="middle" fill="#555" font-weight="bold" textLength="17.50" lengthAdjust="spacingAndGlyphs" stroke="#555" stroke-width="0.3">jan.-18</text>
<text x="405.60" y="454.70" font-size="5.5" text-anchor="middle" fill="#555" font-weight="bold" textLength="18.00" lengthAdjust="spacingAndGlyphs" stroke="#555" stroke-width="0.3">feb.-18</text>
<text x="432.60" y="454.70" font-size="5.5" text-anchor="middle" fill="#555" font-weight="bold" textLength="22.00" lengthAdjust="spacingAndGlyphs" stroke="#555" stroke-width="0.3">mars-18</text>
<text x="459.60" y="454.70" font-size="5.5" text-anchor="middle" fill="#555" font-weight="bold" textLength="19.50" lengthAdjust="spacingAndGlyphs" stroke="#555" stroke-width="0.3">april-18</text>
<text x="486.60" y="454.70" font-size="5.5" text-anchor="middle" fill="#555" font-weight="bold" textLength="17.00" lengthAdjust="spacingAndGlyphs" stroke="#555" stroke-width="0.3">mai-18</text>
<text x="513.60" y="454.70" font-size="5.5" text-anchor="middle" fill="#555" font-weight="bold" textLength="17.50" lengthAdjust="spacingAndGlyphs" stroke="#555" stroke-width="0.3">juni-18</text>
<text x="540.60" y="454.70" font-size="5.5" text-anchor="middle" fill="#555" font-weight="bold" textLength="15.50" lengthAdjust="spacingAndGlyphs" stroke="#555" stroke-width="0.3">juli-18</text>
<text x="567.60" y="454.70" font-size="5.5" text-anchor="middle" fill="#555" font-weight="bold" textLength="18.50" lengthAdjust="spacingAndGlyphs" stroke="#555" stroke-width="0.3">aug.-18</text>
<text x="594.60" y="454.70" font-size="5.5" text-anchor="middle" fill="#555" font-weight="bold" textLength="18.50" lengthAdjust="spacingAndGlyphs" stroke="#555" stroke-width="0.3">sep.-18</text>
<text x="621.60" y="454.70" font-size="5.5" text-anchor="middle" fill="#555" font-weight="bold" textLength="17.50" lengthAdjust="spacingAndGlyphs" stroke="#555" stroke-width="0.3">okt.-18</text>
<text x="648.60" y="454.70" font-size="5.5" text-anchor="middle" fill="#555" font-weight="bold" textLength="18.50" lengthAdjust="spacingAndGlyphs" stroke="#555" stroke-width="0.3">nov.-18</text>
<text transform="translate(346.90,374.30) rotate(-90)" font-size="5.4" font-weight="bold" fill="#111" stroke="#111" stroke-width="0.2" text-anchor="middle" textLength="83.0" lengthAdjust="spacingAndGlyphs">Avg Vacation Days pr Employee</text>
<text y="111.30" font-size="9.2" fill="#0c0c0c" stroke="#0c0c0c" stroke-width="0.12"><tspan x="340.00" textLength="18.20" lengthAdjust="spacingAndGlyphs">Time</tspan> <tspan x="361.40" textLength="17.70" lengthAdjust="spacingAndGlyphs">Split</tspan></text>
<g clip-path="url(#pieclip)">
<path d="M454.7,195.4 L454.70,126.80 A68.6,68.6 0 0 1 454.92,126.80 Z" fill="#1ea7e1" stroke="#f4f8e0" stroke-width="0.25" stroke-linejoin="round"/>
<path d="M454.7,195.4 L454.92,126.80 A68.6,68.6 0 0 1 479.43,131.41 Z" fill="#1f8f8a" stroke="#f4f8e0" stroke-width="0.6" stroke-linejoin="round"/>
<path d="M454.7,195.4 L479.43,131.41 A68.6,68.6 0 0 1 481.15,132.10 Z" fill="#27b36a" stroke="#f4f8e0" stroke-width="0.25" stroke-linejoin="round"/>
<path d="M454.7,195.4 L481.15,132.10 A68.6,68.6 0 0 1 521.34,211.67 Z" fill="#b8f600" stroke="#f4f8e0" stroke-width="0.6" stroke-linejoin="round"/>
<path d="M454.7,195.4 L521.34,211.67 A68.6,68.6 0 1 1 451.04,126.90 Z" fill="#ffe600" stroke="#f4f8e0" stroke-width="0.6" stroke-linejoin="round"/>
<path d="M454.7,195.4 L451.04,126.90 A68.6,68.6 0 0 1 452.63,126.83 Z" fill="#ff9a50" stroke="#f4f8e0" stroke-width="0.25" stroke-linejoin="round"/>
<path d="M454.7,195.4 L452.63,126.83 A68.6,68.6 0 0 1 454.70,126.80 Z" fill="#e4d4d0" stroke="#f4f8e0" stroke-width="0.25" stroke-linejoin="round"/>
<circle cx="454.7" cy="195.4" r="68.6" fill="url(#shade)" mask="url(#shmask)"/>
</g>
<path d="M386.5,126.7 L385,126.7 L382.5,130.2" fill="none" stroke="#ffb070" stroke-width="0.8"/>
<path d="M452.5,126.5 L385,126.5 L382.5,123.2" fill="none" stroke="#d0d0d8" stroke-width="0.9"/>
<text x="379.60" y="124.50" font-size="5.8" text-anchor="end" fill="#444" font-weight="bold" textLength="16.00" lengthAdjust="spacingAndGlyphs" stroke="#444" stroke-width="0.15">0,48 %</text>
<text x="379.60" y="131.50" font-size="5.8" text-anchor="end" fill="#444" font-weight="bold" textLength="16.00" lengthAdjust="spacingAndGlyphs" stroke="#444" stroke-width="0.15">0,37 %</text>
<path d="M455,126.6 L523.5,126.6 L527.5,121.8" fill="none" stroke="#6cc4ea" stroke-width="0.8"/>
<path d="M468,127.6 L527.5,127.6" fill="none" stroke="#4aa5a0" stroke-width="0.9"/>
<path d="M481,131.0 L523.5,131.0 L527.5,135.2" fill="none" stroke="#7fd0a0" stroke-width="0.8"/>
<text x="529.00" y="123.70" font-size="5.8" text-anchor="start" fill="#444" font-weight="bold" textLength="16.00" lengthAdjust="spacingAndGlyphs" stroke="#444" stroke-width="0.15">0,05 %</text>
<text x="529.00" y="130.60" font-size="5.8" text-anchor="start" fill="#444" font-weight="bold" textLength="16.00" lengthAdjust="spacingAndGlyphs" stroke="#444" stroke-width="0.15">5,82 %</text>
<text x="529.00" y="137.40" font-size="5.8" text-anchor="start" fill="#444" font-weight="bold" textLength="16.00" lengthAdjust="spacingAndGlyphs" stroke="#444" stroke-width="0.15">0,43 %</text>
<path d="M518.5,164.3 L527.5,164.3" fill="none" stroke="#c4ee50" stroke-width="0.9"/>
<text x="529.00" y="166.40" font-size="5.8" text-anchor="start" fill="#444" font-weight="bold" textLength="19.00" lengthAdjust="spacingAndGlyphs" stroke="#444" stroke-width="0.15">22,51 %</text>
<path d="M381,240 L402,240" fill="none" stroke="#f0dc50" stroke-width="0.9"/>
<text x="379.40" y="241.50" font-size="5.8" text-anchor="end" fill="#444" font-weight="bold" textLength="18.50" lengthAdjust="spacingAndGlyphs" stroke="#444" stroke-width="0.15">70,34 %</text>
<rect x="580.0" y="166.00" width="4" height="4" fill="#1ea7e1"/>
<rect x="580.0" y="175.28" width="4" height="4" fill="#167a76"/>
<text x="587.40" y="179.48" font-size="6.2" text-anchor="start" fill="#5a5a5a" font-weight="bold" textLength="19.00" lengthAdjust="spacingAndGlyphs">Holiday</text>
<rect x="580.0" y="184.56" width="4" height="4" fill="#27a860"/>
<text x="587.40" y="188.76" font-size="6.2" text-anchor="start" fill="#5a5a5a" font-weight="bold" textLength="69.20" lengthAdjust="spacingAndGlyphs">New Business/Sales Time</text>
<rect x="580.0" y="193.84" width="4" height="4" fill="#a4e010"/>
<text x="587.40" y="198.04" font-size="6.2" text-anchor="start" fill="#5a5a5a" font-weight="bold" textLength="55.80" lengthAdjust="spacingAndGlyphs">Non-Productive Time</text>
<rect x="580.0" y="203.12" width="4" height="4" fill="#e8c800"/>
<text x="587.40" y="207.32" font-size="6.2" text-anchor="start" fill="#5a5a5a" font-weight="bold" textLength="65.00" lengthAdjust="spacingAndGlyphs">Productive Time, Billable</text>
<rect x="580.0" y="212.40" width="4" height="4" fill="#f08020"/>
<text x="587.40" y="216.60" font-size="6.2" text-anchor="start" fill="#5a5a5a" font-weight="bold" textLength="24.50" lengthAdjust="spacingAndGlyphs">Sickness</text>
<rect x="580.0" y="221.68" width="4" height="4" fill="#a8a8a8"/>
<text x="587.40" y="225.88" font-size="6.2" text-anchor="start" fill="#5a5a5a" font-weight="bold" textLength="36.50" lengthAdjust="spacingAndGlyphs">Training Time</text>
</g>
</svg>
</body></html>
